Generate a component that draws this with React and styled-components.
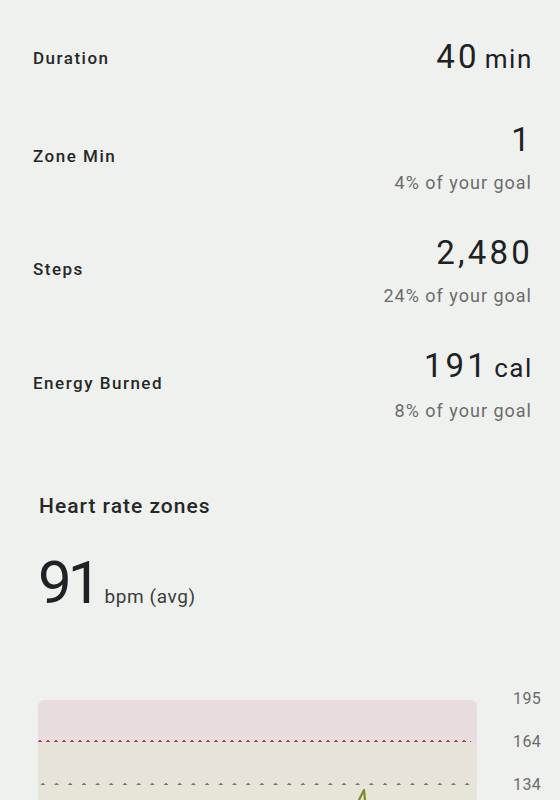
import styled, { createGlobalStyle } from "styled-components";

const GlobalStyle = createGlobalStyle`
  body {
    margin: 0;
    background-color: #eff1ee;
    font-family: Roboto, "Liberation Sans", sans-serif;
    color: #202124;
  }
`;

const Page = styled.div`
  display: flex;
  flex-direction: column;
  padding-top: 35px;
`;

const StatsList = styled.div`
  display: flex;
  flex-direction: column;
  gap: 37px;
  padding: 0 29px 0 33px;
`;

const StatRow = styled.div`
  display: flex;
  justify-content: space-between;
  align-items: center;
`;

const Label = styled.div`
  font-size: 17px;
  font-weight: 500;
  letter-spacing: 1.5px;
  color: #262827;
`;

const ValueBlock = styled.div`
  display: flex;
  flex-direction: column;
  align-items: flex-end;
`;

const Value = styled.div`
  font-size: 33px;
  line-height: 44px;
  letter-spacing: 3.2px;
  margin-right: -2px;
`;

const Unit = styled.span`
  font-size: 26px;
  margin-left: 5px;
  letter-spacing: 1.6px;
`;

const Goal = styled.div`
  margin-top: 10px;
  font-size: 18px;
  line-height: 22px;
  color: #6a6c6b;
  letter-spacing: 1px;
  margin-right: -1px;
`;

const HeartSection = styled.section`
  display: flex;
  flex-direction: column;
  margin-top: 70px;
  padding: 0 19px 0 38px;
`;

const Title = styled.h2`
  margin: 0 0 0 1px;
  font-size: 21px;
  line-height: 28px;
  font-weight: 500;
  letter-spacing: 1px;
  color: #262827;
`;

const AvgRow = styled.div`
  display: flex;
  align-items: baseline;
  margin: 27px 0 0 0;
  line-height: 72px;
`;

const AvgNumber = styled.span`
  font-size: 60px;
  letter-spacing: -4px;
`;

const AvgUnit = styled.span`
  margin-left: 7px;
  font-size: 19px;
  letter-spacing: 0.6px;
  color: #3c3d3c;
`;

const Chart = styled.div`
  display: grid;
  grid-template-columns: 439px 1fr;
  margin-top: 67px;
`;

const Zones = styled.div`
  position: relative;
  display: flex;
  flex-direction: column;
`;

const Zone = styled.div`
  height: ${(p) => p.$h}px;
  background-color: ${(p) => p.$bg};
  border-radius: ${(p) => (p.$top ? "6px 6px 0 0" : "0")};
`;

// dotted zone boundary
const Dots = styled.div`
  height: 4px;
  margin: -2px 6px -2px -2px;
  background-image: radial-gradient(
    circle,
    ${(p) => p.$color} 1.5px,
    transparent 2.1px
  );
  background-size: ${(p) => p.$step}px 4px;
  background-repeat: repeat-x;
`;

const Axis = styled.div`
  display: flex;
  flex-direction: column;
  align-items: flex-end;
  gap: 23px;
  margin-top: -11px;
`;

const Tick = styled.div`
  font-size: 16px;
  line-height: 20px;
  letter-spacing: 0.3px;
  color: #6b6c6b;
`;

const Trace = styled.svg`
  position: absolute;
  left: 0;
  top: 0;
  overflow: visible;
`;

const stats = [
  { label: "Duration", value: "40", unit: "min" },
  { label: "Zone Min", value: "1", goal: "4% of your goal" },
  { label: "Steps", value: "2,480", goal: "24% of your goal" },
  { label: "Energy Burned", value: "191", unit: "cal", goal: "8% of your goal" },
];

export default function App() {
  return (
    <>
      <GlobalStyle />
      <Page>
        <StatsList>
          {stats.map((s) => (
            <StatRow key={s.label}>
              <Label>{s.label}</Label>
              <ValueBlock>
                <Value>
                  {s.value}
                  {s.unit && <Unit>{s.unit}</Unit>}
                </Value>
                {s.goal && <Goal>{s.goal}</Goal>}
              </ValueBlock>
            </StatRow>
          ))}
        </StatsList>

        <HeartSection>
          <Title>Heart rate zones</Title>
          <AvgRow>
            <AvgNumber>91</AvgNumber>
            <AvgUnit>bpm (avg)</AvgUnit>
          </AvgRow>

          <Chart>
            <Zones>
              <Zone $h={42} $bg="#e9dcdf" $top />
              <Dots $color="#a8405a" $step={8} />
              <Zone $h={43} $bg="#e7e3da" />
              <Dots $color="#7a6f60" $step={13.7} />
              <Zone $h={60} $bg="#e5e5d8" />
              <Trace width="439" height="145">
                <polyline
                  points="319,104 323,96 326,90 328,110"
                  fill="none"
                  stroke="#7f8a26"
                  strokeWidth="2.2"
                  strokeLinejoin="round"
                />
              </Trace>
            </Zones>
            <Axis>
              <Tick>195</Tick>
              <Tick>164</Tick>
              <Tick>134</Tick>
            </Axis>
          </Chart>
        </HeartSection>
      </Page>
    </>
  );
}
